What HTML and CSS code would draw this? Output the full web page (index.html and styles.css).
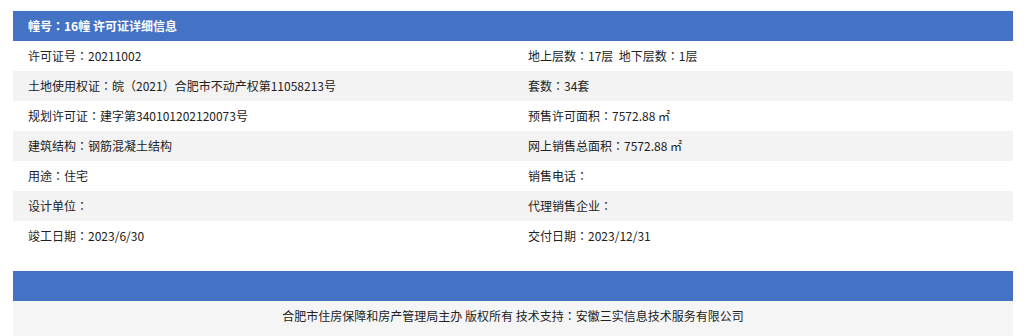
FILE: index.html
```html
<!DOCTYPE html>
<html lang="zh-CN">
<head>
<meta charset="utf-8">
<title>许可证详细信息</title>
<link rel="stylesheet" href="styles.css">
</head>
<body>
<div class="page">
  <div class="panel">
    <div class="panel-title">幢号<span class="sep">：</span>16幢 许可证详细信息</div>
    <div class="row">
      <div class="cell">许可证号<span class="sep">：</span>20211002</div>
      <div class="cell">地上层数<span class="sep">：</span>17层&nbsp;&nbsp;地下层数<span class="sep">：</span>1层</div>
    </div>
    <div class="row alt">
      <div class="cell">土地使用权证<span class="sep">：</span>皖（2021）合肥市不动产权第11058213号</div>
      <div class="cell">套数<span class="sep">：</span>34套</div>
    </div>
    <div class="row">
      <div class="cell">规划许可证<span class="sep">：</span>建字第340101202120073号</div>
      <div class="cell">预售许可面积<span class="sep">：</span>7572.88 ㎡</div>
    </div>
    <div class="row alt">
      <div class="cell">建筑结构<span class="sep">：</span>钢筋混凝土结构</div>
      <div class="cell">网上销售总面积<span class="sep">：</span>7572.88 ㎡</div>
    </div>
    <div class="row">
      <div class="cell">用途<span class="sep">：</span>住宅</div>
      <div class="cell">销售电话<span class="sep">：</span></div>
    </div>
    <div class="row alt">
      <div class="cell">设计单位<span class="sep">：</span></div>
      <div class="cell">代理销售企业<span class="sep">：</span></div>
    </div>
    <div class="row">
      <div class="cell">竣工日期<span class="sep">：</span>2023/6/30</div>
      <div class="cell">交付日期<span class="sep">：</span>2023/12/31</div>
    </div>
  </div>
  <div class="footer">
    <div class="footer-bar"></div>
    <div class="footer-text">合肥市住房保障和房产管理局主办 版权所有 技术支持<span class="sep">：</span>安徽三实信息技术服务有限公司</div>
  </div>
</div>
</body>
</html>
```
FILE: styles.css
```css
html, body {
  margin: 0;
  padding: 0;
  background: #ffffff;
}
body {
  font-family: "Microsoft YaHei", "Noto Sans CJK SC", "Noto Sans", sans-serif;
  font-size: 12px;
  color: #222222;
}
.page {
  width: 1000px;
  padding: 11px 0 0 13px;
}
.panel {
  display: flex;
  flex-direction: column;
}
.panel-title {
  height: 30px;
  line-height: 30px;
  padding-left: 15px;
  background: #4472c4;
  color: #ffffff;
  font-weight: bold;
}
.sep {
  font-family: "Noto Sans CJK TC", "Noto Sans CJK JP", sans-serif;
  font-feature-settings: "locl" 0;
}
.row {
  display: grid;
  grid-template-columns: 500px 500px;
  height: 30px;
  background: #ffffff;
}
.row.alt {
  background: #f3f3f3;
}
.cell {
  line-height: 30px;
  padding-left: 15px;
  white-space: nowrap;
}
.footer {
  margin-top: 20px;
}
.footer-bar {
  height: 30px;
  background: #4472c4;
}
.footer-text {
  background: #f5f5f5;
  text-align: center;
  line-height: 30px;
  padding: 0 0 10px;
}
```
